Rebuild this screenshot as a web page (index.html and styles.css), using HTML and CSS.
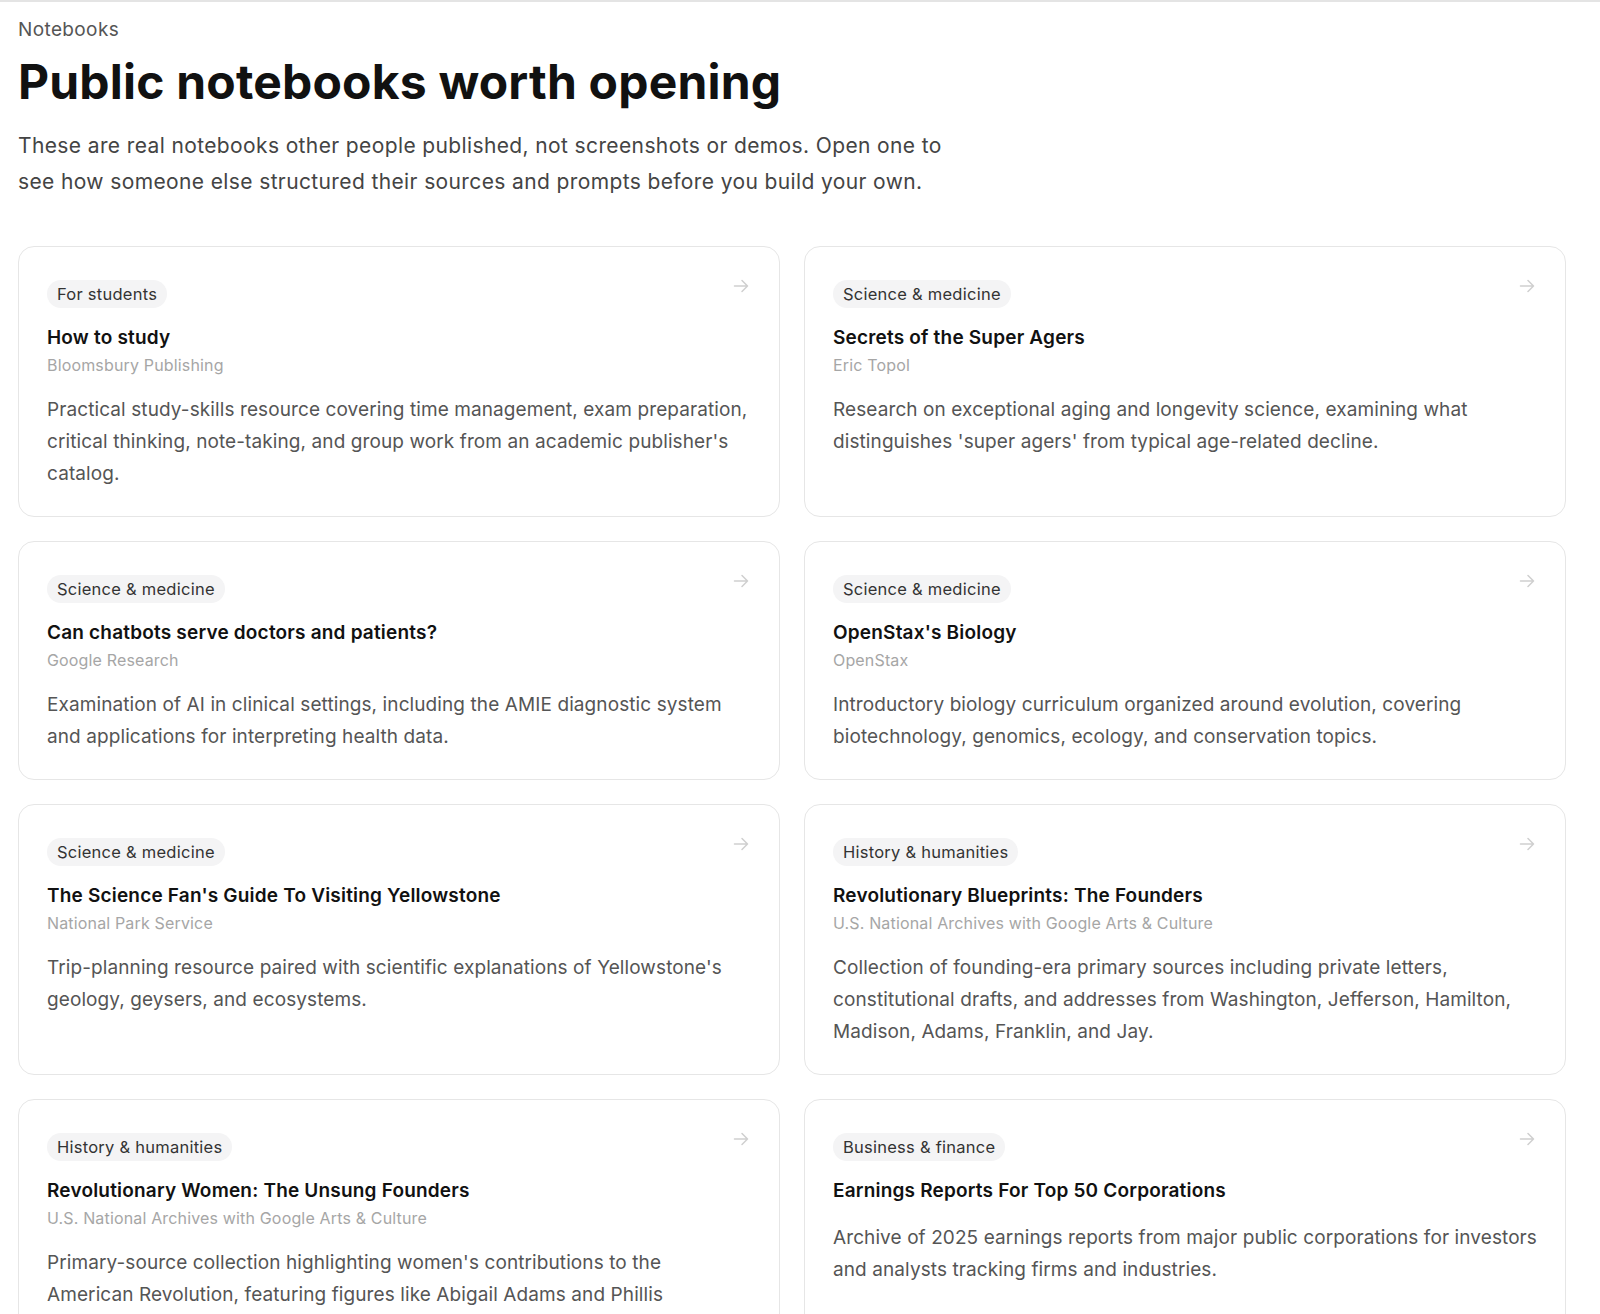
FILE: index.html
```html
<!DOCTYPE html>
<html>
<head>
    <title>Notebooks - Public notebooks worth opening</title>
    <link rel="stylesheet" href="styles.css">
</head>
<body>
    <main class="page">
        <header class="intro">
            <div class="eyebrow">Notebooks</div>
            <h1>Public notebooks worth opening</h1>
            <p class="lead">These are real notebooks other people published, not screenshots or demos. Open one to see how someone else structured their sources and prompts before you build your own.</p>
        </header>

        <section class="grid">
            <a class="card" href="#">
                <div class="card-top">
                    <span class="tag">For students</span>
                    <svg class="arrow" viewBox="0 0 16 16"><path d="M1.5 8h13M9 2.5 14.5 8 9 13.5"/></svg>
                </div>
                <h3>How to study</h3>
                <div class="source">Bloomsbury Publishing</div>
                <p class="desc">Practical study-skills resource covering time management, exam preparation, critical thinking, note-taking, and group work from an academic publisher's catalog.</p>
            </a>

            <a class="card" href="#">
                <div class="card-top">
                    <span class="tag">Science &amp; medicine</span>
                    <svg class="arrow" viewBox="0 0 16 16"><path d="M1.5 8h13M9 2.5 14.5 8 9 13.5"/></svg>
                </div>
                <h3>Secrets of the Super Agers</h3>
                <div class="source">Eric Topol</div>
                <p class="desc">Research on exceptional aging and longevity science, examining what distinguishes 'super agers' from typical age-related decline.</p>
            </a>

            <a class="card" href="#">
                <div class="card-top">
                    <span class="tag">Science &amp; medicine</span>
                    <svg class="arrow" viewBox="0 0 16 16"><path d="M1.5 8h13M9 2.5 14.5 8 9 13.5"/></svg>
                </div>
                <h3>Can chatbots serve doctors and patients?</h3>
                <div class="source">Google Research</div>
                <p class="desc">Examination of AI in clinical settings, including the AMIE diagnostic system and applications for interpreting health data.</p>
            </a>

            <a class="card" href="#">
                <div class="card-top">
                    <span class="tag">Science &amp; medicine</span>
                    <svg class="arrow" viewBox="0 0 16 16"><path d="M1.5 8h13M9 2.5 14.5 8 9 13.5"/></svg>
                </div>
                <h3>OpenStax's Biology</h3>
                <div class="source">OpenStax</div>
                <p class="desc">Introductory biology curriculum organized around evolution, covering biotechnology, genomics, ecology, and conservation topics.</p>
            </a>

            <a class="card" href="#">
                <div class="card-top">
                    <span class="tag">Science &amp; medicine</span>
                    <svg class="arrow" viewBox="0 0 16 16"><path d="M1.5 8h13M9 2.5 14.5 8 9 13.5"/></svg>
                </div>
                <h3>The Science Fan's Guide To Visiting Yellowstone</h3>
                <div class="source">National Park Service</div>
                <p class="desc">Trip-planning resource paired with scientific explanations of Yellowstone's geology, geysers, and ecosystems.</p>
            </a>

            <a class="card" href="#">
                <div class="card-top">
                    <span class="tag">History &amp; humanities</span>
                    <svg class="arrow" viewBox="0 0 16 16"><path d="M1.5 8h13M9 2.5 14.5 8 9 13.5"/></svg>
                </div>
                <h3>Revolutionary Blueprints: The Founders</h3>
                <div class="source">U.S. National Archives with Google Arts &amp; Culture</div>
                <p class="desc">Collection of founding-era primary sources including private letters, constitutional drafts, and addresses from Washington, Jefferson, Hamilton, Madison, Adams, Franklin, and Jay.</p>
            </a>

            <a class="card" href="#">
                <div class="card-top">
                    <span class="tag">History &amp; humanities</span>
                    <svg class="arrow" viewBox="0 0 16 16"><path d="M1.5 8h13M9 2.5 14.5 8 9 13.5"/></svg>
                </div>
                <h3>Revolutionary Women: The Unsung Founders</h3>
                <div class="source">U.S. National Archives with Google Arts &amp; Culture</div>
                <p class="desc">Primary-source collection highlighting women's contributions to the American Revolution, featuring figures like Abigail Adams and Phillis Wheatley.</p>
            </a>

            <a class="card" href="#">
                <div class="card-top">
                    <span class="tag">Business &amp; finance</span>
                    <svg class="arrow" viewBox="0 0 16 16"><path d="M1.5 8h13M9 2.5 14.5 8 9 13.5"/></svg>
                </div>
                <h3>Earnings Reports For Top 50 Corporations</h3>
                <p class="desc">Archive of 2025 earnings reports from major public corporations for investors and analysts tracking firms and industries.</p>
            </a>
        </section>
    </main>
</body>
</html>
```

FILE: styles.css
```css
body { margin: 0; border-top: 2px solid #e4e4e4; background: #fff; font-family: Inter, "Noto Sans", sans-serif; color: #111; }
.page { padding: 16px 34px 40px 18px; }

.eyebrow { font-size: 19px; line-height: 24px; letter-spacing: 0.02em; color: #555; }
h1 { margin: 12px 0 0; font-size: 48px; line-height: 56px; font-weight: 700; letter-spacing: 0.004em; color: #111; }
.lead { margin: 18px 0 0; max-width: 940px; font-size: 21px; line-height: 36px; letter-spacing: 0.018em; color: #444; }

.grid { margin-top: 46px; display: grid; grid-template-columns: 1fr 1fr; gap: 24px; }
.card { display: block; border: 1px solid #e6e6e6; border-radius: 16px; padding: 33px 28px 26px; text-decoration: none; color: inherit; }
.card-top { display: flex; justify-content: space-between; align-items: flex-start; }
.tag { background: #f4f4f5; border-radius: 14px; padding: 0 10px; font-size: 16.5px; line-height: 28px; letter-spacing: 0.015em; color: #333; }
.arrow { width: 16px; height: 16px; margin: -2px 2px 0 0; fill: none; stroke: #cfcfcf; stroke-width: 1.5; stroke-linecap: round; stroke-linejoin: round; }

.card h3 { margin: 17px 0 0; font-size: 19px; line-height: 26px; font-weight: 600; letter-spacing: 0.01em; color: #111; }
.source { margin-top: 3px; font-size: 16px; line-height: 22px; letter-spacing: 0.01em; color: #a6a6a6; }
.desc { margin: 18px 0 0; font-size: 19px; line-height: 32px; letter-spacing: 0.005em; color: #555; }
.card h3 + .desc { margin-top: 18px; }
```
